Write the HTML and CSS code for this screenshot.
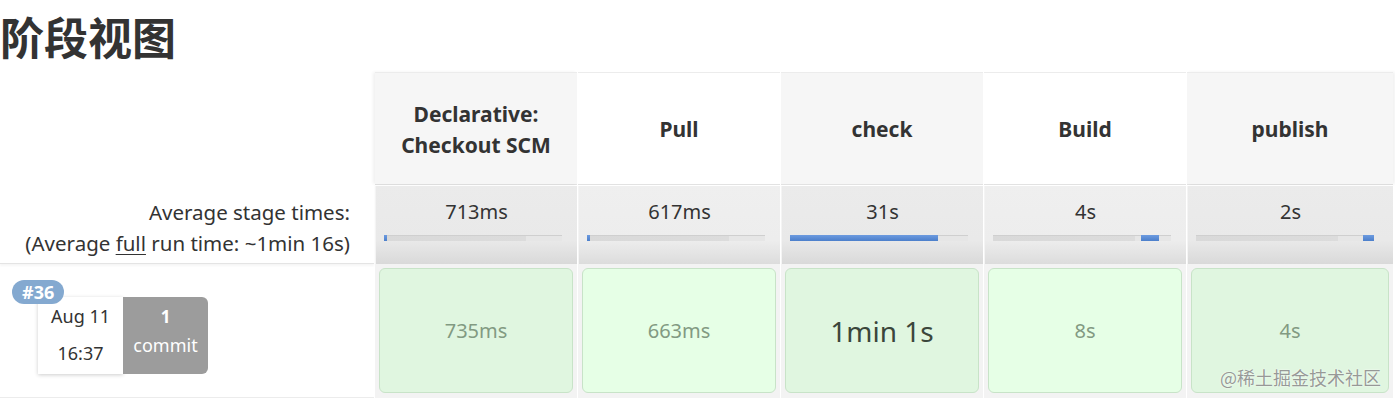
FILE: index.html
```html
<!DOCTYPE html>
<html lang="zh">
<head>
<meta charset="utf-8">
<title>阶段视图</title>
<link rel="stylesheet" href="styles.css">
</head>
<body>
<h1 class="title">阶段视图</h1>
<div class="stage-view">
  <div class="corner"></div>
  <div class="head shade">Declarative:<br>Checkout SCM</div>
  <div class="head">Pull</div>
  <div class="head shade">check</div>
  <div class="head">Build</div>
  <div class="head shade">publish</div>

  <div class="avg-label">
    <div>Average stage times:</div>
    <div>(Average <span class="u">full</span> run time: ~1min 16s)</div>
  </div>
  <div class="avg">713ms<div class="bar"><div class="fill" style="margin-left:0;width:3px"></div></div></div>
  <div class="avg light">617ms<div class="bar"><div class="fill" style="margin-left:0;width:3px"></div></div></div>
  <div class="avg">31s<div class="bar"><div class="fill" style="margin-left:0;width:148px"></div></div></div>
  <div class="avg light">4s<div class="bar"><div class="fill" style="margin-left:148px;width:18px"></div></div></div>
  <div class="avg">2s<div class="bar"><div class="fill" style="margin-left:167px;width:11px"></div></div></div>

  <div class="run">
    <span class="badge">#36</span>
    <div class="run-info">
      <div class="date"><div>Aug 11</div><div>16:37</div></div>
      <div class="commits"><div class="num">1</div><div>commit</div></div>
    </div>
  </div>
  <div class="cell"><div class="box">735ms</div></div>
  <div class="cell"><div class="box light">663ms</div></div>
  <div class="cell"><div class="box big">1min 1s</div></div>
  <div class="cell"><div class="box light">8s</div></div>
  <div class="cell"><div class="box">4s</div></div>
  <div class="watermark">@稀土掘金技术社区</div>
</div>
</body>
</html>
```

FILE: styles.css
```css
html, body {
  margin: 0;
  padding: 0;
  background: #fff;
  font-family: "Noto Sans", "Open Sans", sans-serif;
  color: #333;
}

.title {
  margin: 0;
  height: 72px;
  padding-left: 0;
  font-family: "Noto Sans CJK SC", sans-serif;
  font-weight: 700;
  font-size: 44px;
  line-height: 72px;
  color: #333;
}

.stage-view {
  position: relative;
  display: grid;
  grid-template-columns: 374px repeat(4, 202px) 206px;
  grid-template-rows: 112px 80px 134px;
  column-gap: 1px;
  width: 1395px;
}

.corner {
  background: #fff;
}

.head {
  display: flex;
  align-items: center;
  justify-content: center;
  text-align: center;
  font-weight: 700;
  font-size: 21px;
  line-height: 31px;
  padding-top: 2px;
  background: #fff;
  border-top: 1px solid #ececec;
  box-shadow: 0 1px 0 #e2e2e2;
}
.head.shade {
  background: #f6f6f6;
}
.head:nth-child(2) {
  box-shadow: -2px 0 3px rgba(0,0,0,0.06), 0 1px 0 #e2e2e2;
}
.head:nth-child(6) {
  box-shadow: 2px 0 3px rgba(0,0,0,0.06), 0 1px 0 #e2e2e2;
}

.avg-label {
  display: flex;
  flex-direction: column;
  align-items: flex-end;
  justify-content: center;
  gap: 3px;
  padding-right: 24px;
  padding-top: 8px;
  font-size: 20.5px;
  line-height: 28px;
  border-bottom: 1px solid #e4e4e4;
  box-shadow: 0 2px 2px rgba(0,0,0,0.04);
}
.u { text-decoration: underline; text-underline-offset: 3px; text-decoration-thickness: 1px; }

.avg {
  margin-top: 2px;
  padding-top: 12px;
  font-size: 20px;
  line-height: 28px;
  text-align: center;
  background: linear-gradient(#ebebeb 0%, #e9e9e9 70%, #d9d9d9 100%);
  border-left: 1px solid #f4f4f4;
}
.avg.light {
  background: linear-gradient(#efefef 0%, #ededed 70%, #dcdcdc 100%);
}
.bar {
  display: flex;
  margin: 9px 0 0 8px;
  width: 178px;
  height: 6px;
  background: linear-gradient(90deg, #d9d9d9 0%, #dcdcdc 80%, #e6e6e6 80%, #e6e6e6 100%);
  box-shadow: inset 0 1px 0 #cfcfcf;
}
.fill {
  height: 6px;
  background: linear-gradient(#6d9be0, #4c7fcb);
}

.run {
  position: relative;
  margin-top: 1px;
  border-bottom: 1px solid #ececec;
}
.badge {
  position: absolute;
  left: 12px;
  top: 15px;
  z-index: 2;
  padding: 0 10px;
  height: 24px;
  line-height: 24px;
  border-radius: 12px;
  background: #84a9d0;
  color: #fff;
  font-weight: 700;
  font-size: 18px;
}
.run-info {
  display: flex;
  margin: 32px 0 0 38px;
}
.date {
  width: 85px;
  height: 77px;
  background: #fff;
  box-shadow: 0 1px 4px rgba(0,0,0,0.2);
  display: flex;
  flex-direction: column;
  justify-content: space-around;
  align-items: center;
  font-size: 18px;
  padding: 0 0 2px;
  box-sizing: border-box;
}
.commits {
  width: 85px;
  height: 77px;
  background: #9c9c9c;
  border-radius: 0 6px 6px 0;
  color: #fff;
  display: flex;
  flex-direction: column;
  align-items: center;
  padding-top: 6px;
  box-sizing: border-box;
  font-size: 18px;
  line-height: 28px;
}
.commits .num { font-weight: 700; font-size: 17px; }

.cell {
  padding: 4px;
  background: #f3f3f3;
}
.box {
  height: 125px;
  box-sizing: border-box;
  border: 1px solid #c8e3c8;
  border-radius: 6px;
  background: #e0f6e0;
  display: flex;
  align-items: center;
  justify-content: center;
  font-size: 20px;
  color: #829a82;
}
.box.light {
  background: #e6ffe6;
}
.box.big {
  font-size: 28px;
  color: #3b463b;
}

.watermark {
  position: absolute;
  right: 14px;
  bottom: 8px;
  font-family: "Noto Sans CJK SC", sans-serif;
  font-size: 18px;
  color: rgba(120,120,120,0.75);
  text-shadow: 0 0 2px #fff;
}
```
